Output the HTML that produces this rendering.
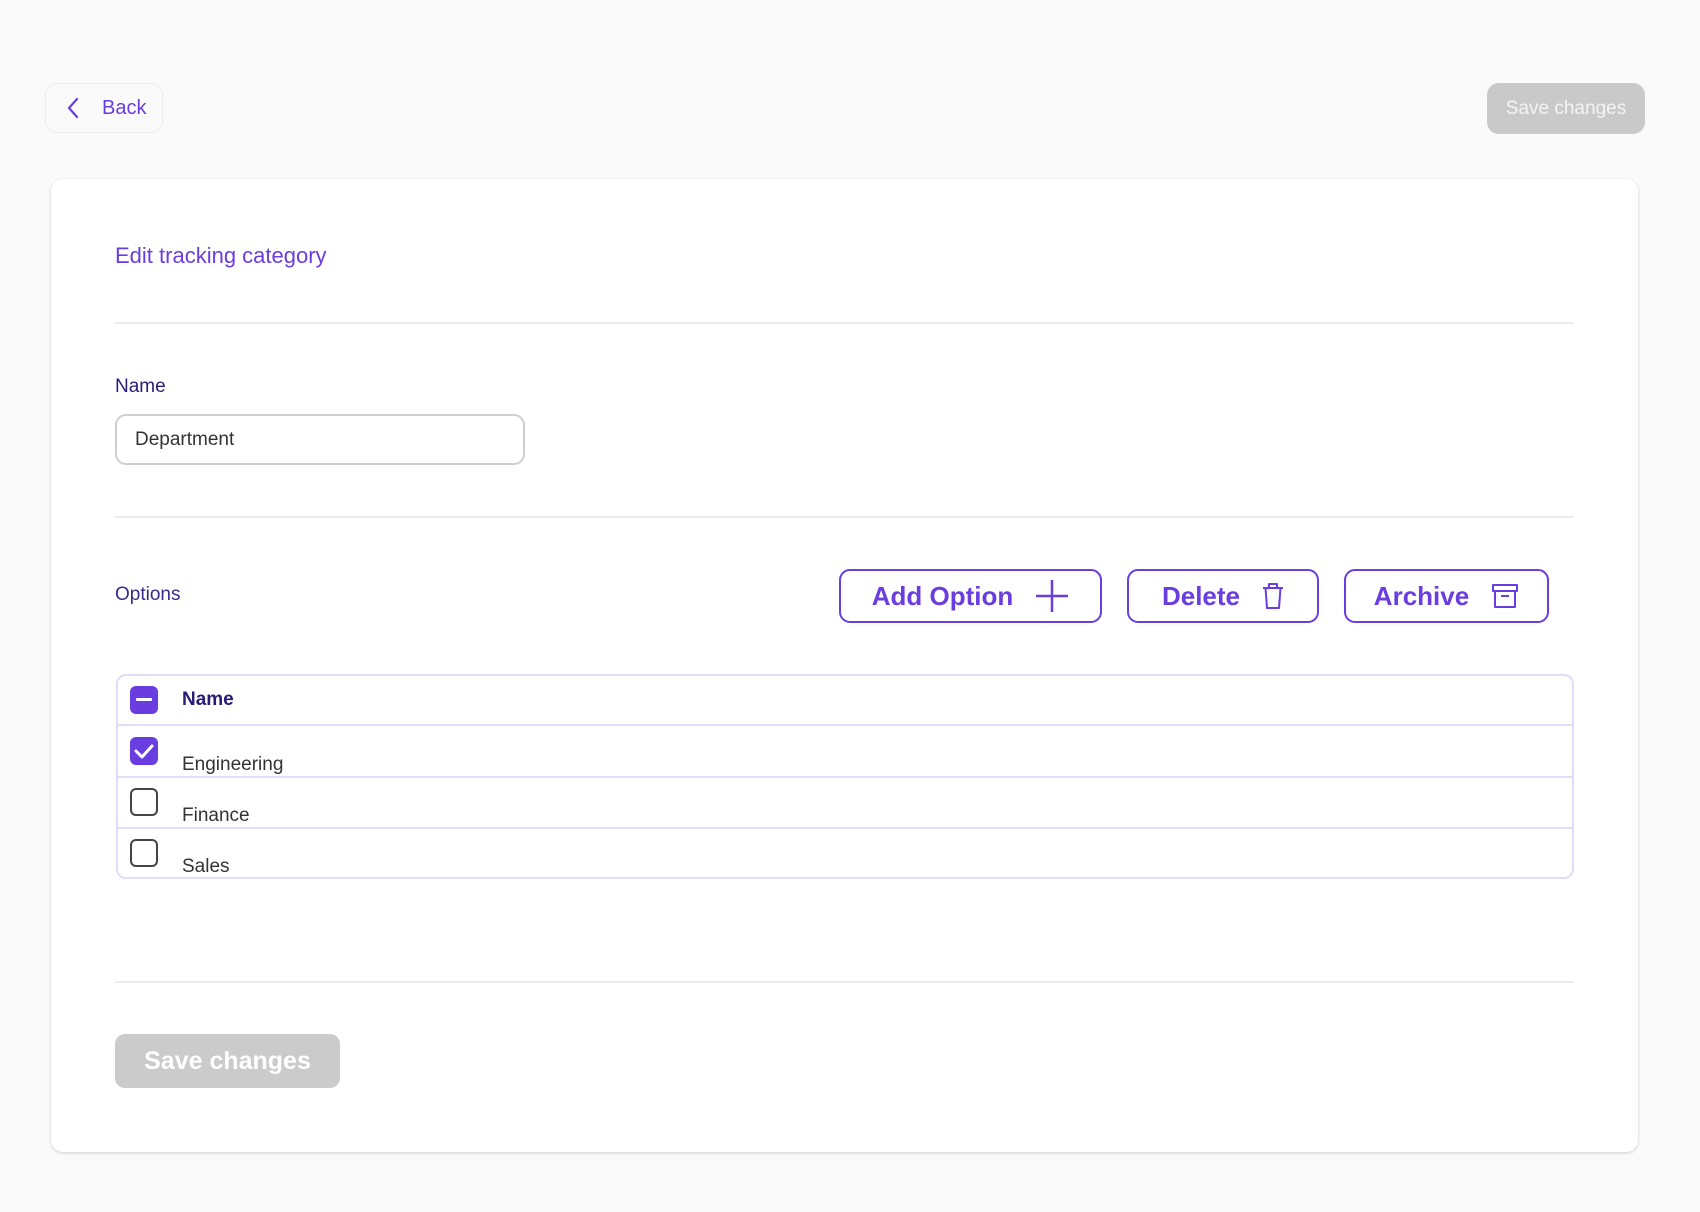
<!DOCTYPE html>
<html><head><meta charset="utf-8"><style>
*{box-sizing:border-box;margin:0;padding:0}
body{width:1700px;height:1212px;background:#fafafa;font-family:"Liberation Sans",sans-serif;position:relative;overflow:hidden}
.abs{position:absolute}
.back{left:45px;top:83px;width:118px;height:50px;border:1.5px solid #ececf0;border-radius:12px;background:#fafafa;color:#6a3de0;font-size:20px;display:flex;align-items:center;padding-left:20px}
.back span{margin-left:22px}
.savetop{left:1487px;top:83px;width:158px;height:51px;background:#c9c9c9;border-radius:12px;color:#f4f4f4;font-size:19px;display:flex;align-items:center;justify-content:center}
.card{left:51px;top:179px;width:1587px;height:973px;background:#fff;border-radius:12px;box-shadow:0 1px 3px rgba(0,0,0,.18)}
.title{left:115px;top:243px;color:#6a3de0;font-size:22px}
.hr{left:115px;width:1459px;height:2px;background:#ececec}
.lbl{left:115px;color:#2b1a78;font-size:19px}
.input{left:115px;top:414px;width:410px;height:51px;border:2px solid #cfcfcf;border-radius:11px;font-size:19px;color:#333;display:flex;align-items:center;padding-left:18px}
.btn{top:569px;height:54px;border:2px solid #6a3de0;border-radius:11px;color:#6a3de0;font-size:26px;font-weight:bold;display:flex;align-items:center;justify-content:center;gap:22px}
.table{left:116px;top:674px;width:1458px;height:205px;border:2px solid #e2dcf7;border-radius:10px;overflow:hidden}
.row{position:absolute;left:0;width:100%;border-bottom:2px solid #e2dcf7}
.cb{position:absolute;left:12px;width:28px;height:28px;border-radius:6px}
.cell{position:absolute;left:64px;font-size:19px;color:#333}
.savebot{left:115px;top:1034px;width:225px;height:54px;background:#cbcbcb;border-radius:10px;color:#fff;font-size:25px;font-weight:bold;display:flex;align-items:center;justify-content:center}
</style></head><body>
<div class="abs back"><svg width="14" height="22" viewBox="0 0 14 22"><path d="M11 2 L3 11 L11 20" fill="none" stroke="#6a3de0" stroke-width="2.2" stroke-linecap="round" stroke-linejoin="round"/></svg><span>Back</span></div>
<div class="abs savetop">Save changes</div>
<div class="abs card"></div>
<div class="abs title">Edit tracking category</div>
<div class="abs hr" style="top:322px"></div>
<div class="abs lbl" style="top:376px">Name</div>
<div class="abs input">Department</div>
<div class="abs hr" style="top:516px"></div>
<div class="abs lbl" style="top:584px;color:#3b2a8a">Options</div>
<div class="abs btn" style="left:839px;width:263px">Add Option <svg width="34" height="34" viewBox="0 0 34 34"><path d="M17 1V33M1 17H33" stroke="#6a3de0" stroke-width="2.5"/></svg></div>
<div class="abs btn" style="left:1127px;width:192px">Delete <svg width="22" height="28" viewBox="0 0 22 28"><path d="M1 6H21M7 6V2H15V6M3.5 6L5 26H17L18.5 6" fill="none" stroke="#6a3de0" stroke-width="2" stroke-linejoin="round"/></svg></div>
<div class="abs btn" style="left:1344px;width:205px">Archive <svg width="28" height="26" viewBox="0 0 28 26"><path d="M2 2H26V8H2Z M4 8V24H24V8 M10 13H18" fill="none" stroke="#6a3de0" stroke-width="2" stroke-linejoin="round"/></svg></div>
<div class="abs table">
  <div class="row" style="top:0;height:50px">
    <div class="cb" style="top:10px;background:#6a3de0"><div style="position:absolute;left:6px;top:12px;width:16px;height:3px;background:#fff;border-radius:1px"></div></div>
    <div class="cell" style="top:13px;color:#2b1a78;font-weight:bold">Name</div>
  </div>
  <div class="row" style="top:50px;height:52px">
    <div class="cb" style="top:11px;background:#6a3de0"><svg width="28" height="28" viewBox="0 0 28 28" style="position:absolute;left:0;top:0"><path d="M6 14L12 20L22 9" fill="none" stroke="#fff" stroke-width="3" stroke-linecap="round" stroke-linejoin="round"/></svg></div>
    <div class="cell" style="top:28px">Engineering</div>
  </div>
  <div class="row" style="top:102px;height:51px">
    <div class="cb" style="top:10px;border:2px solid #444"></div>
    <div class="cell" style="top:27px">Finance</div>
  </div>
  <div class="row" style="top:153px;height:52px;border-bottom:none">
    <div class="cb" style="top:10px;border:2px solid #444"></div>
    <div class="cell" style="top:27px">Sales</div>
  </div>
</div>
<div class="abs hr" style="top:981px"></div>
<div class="abs savebot">Save changes</div>
</body></html>
